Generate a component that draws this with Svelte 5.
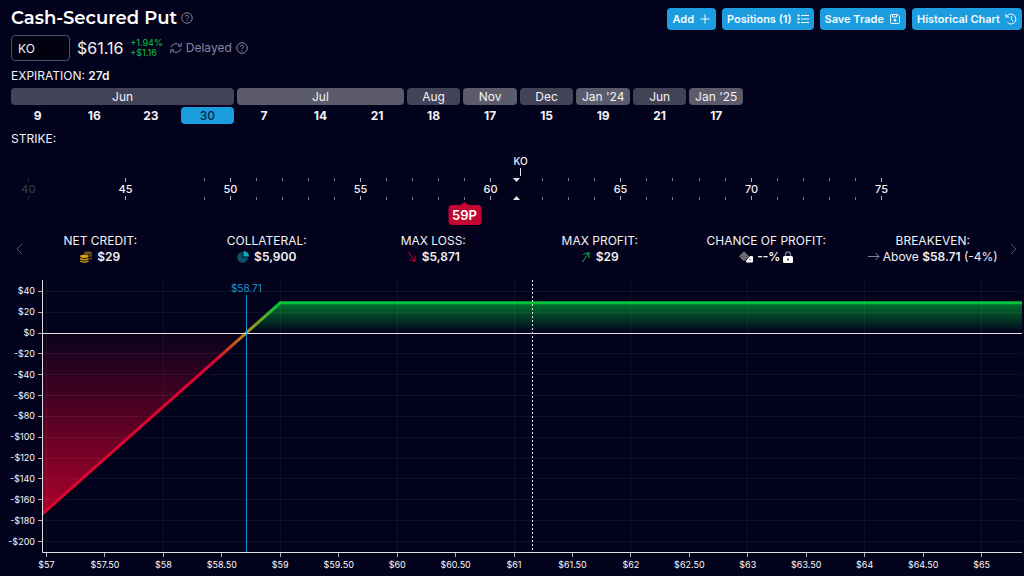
<script>
  let width = $state(1024);

  const months = [
    { name: 'Jun', days: [9, 16, 23, 30] },
    { name: 'Jul', days: [7, 14, 21] },
    { name: 'Aug', days: [18] },
    { name: 'Nov', days: [17] },
    { name: 'Dec', days: [15] },
    { name: "Jan '24", days: [19] },
    { name: 'Jun', days: [21] },
    { name: "Jan '25", days: [17] }
  ];
  const days = months.flatMap((m) => m.days.map((d) => ({ d, month: m.name })));
  let selected = $state(3);
  let symbol = $state('KO');

  // strike ruler: position is counted in steps from the 50 strike
  const step = $derived(width * 0.02544);
  const sx = (n) => Math.floor(width * 0.2247 + n * step) + 0.5;
  const majors = [
    { v: 40, n: -7.75, faded: true },
    { v: 45, n: -4 },
    ...[50, 55, 60, 65, 70, 75].map((v) => ({ v, n: v - 50 }))
  ];
  const minors = [-1, ...Array.from({ length: 25 }, (_, i) => i).filter((i) => i % 5 && i !== 11)];

  // payoff chart
  const left = 42;
  const perDollar = $derived((width - 43) / 8.393);
  const cx = (p) => 46.5 + (p - 57) * perDollar;
  const cy = (v) => 53 - v * 1.0425;
  const crisp = (n) => Math.floor(n) + 0.5;
  const yTicks = Array.from({ length: 13 }, (_, i) => 40 - i * 20);
  const xTicks = Array.from({ length: 17 }, (_, i) => 57 + i / 2);
  const money = (v) => (v < 0 ? '-$' : '$') + Math.abs(v);
  const price = (v) => '$' + (v % 1 ? v.toFixed(2) : v);
  const startPrice = $derived(57 - 3.5 / perDollar);
  const startY = $derived(cy((startPrice - 58.71) * 100));
  const right = $derived(width - 2);
</script>

{#snippet question()}
  <svg class="icon" width="12" height="12" viewBox="0 0 24 24" fill="none" stroke="currentColor" stroke-width="2">
    <circle cx="12" cy="12" r="10.5" />
    <path d="M8.7 9.4C9 7.6 10.3 6.6 12 6.6c1.900 0 3.300 1.200 3.300 2.900 0 2.500-3.300 2.500-3.300 4.700" />
    <path d="M12 16v2.400" />
  </svg>
{/snippet}

<div class="page" bind:clientWidth={width}>
  <header>
    <div class="title">
      <h1>Cash-Secured Put</h1>
      <button class="help" aria-label="Strategy help">{@render question()}</button>
    </div>
    <nav>
      <button class="action">Add
        <svg width="12" height="12" viewBox="0 0 12 12" fill="none" stroke="currentColor"><path d="M6 1.500v9M1.500 6h9" /></svg>
      </button>
      <button class="action">Positions (1)
        <svg width="12" height="12" viewBox="0 0 12 12" fill="none" stroke="currentColor"><path d="M4 2.500h8M4 6h8M4 9.500h8" /><path d="M.5 2.500h2M.5 6h2M.5 9.500h2" stroke-width="2" /></svg>
      </button>
      <button class="action">Save Trade
        <svg width="12" height="12" viewBox="0 0 12 12" fill="none" stroke="currentColor"><path d="M1.500 2.500q0-1 1-1h6l2 2v6q0 1-1 1h-7q-1 0-1-1z" /><path d="M3.500 1.500v2.500h4v-2.500" /><circle cx="6" cy="7.300" r="1" fill="currentColor" /></svg>
      </button>
      <button class="action">Historical Chart
        <svg width="12" height="12" viewBox="0 0 12 12" fill="none" stroke="currentColor"><path d="M1 1v3h3M1.300 4A5 5 0 1 1 2.500 9.700" /><path d="M6.300 3.200v3l2 2" /></svg>
      </button>
    </nav>
  </header>

  <div class="ticker">
    <input aria-label="Symbol" bind:value={symbol} />
    <span class="price">$61.16</span>
    <span class="change"><span>+1.94%</span><span>+$1.16</span></span>
    <button class="delayed">
      <svg width="12" height="12" viewBox="0 0 12 12" fill="none" stroke="currentColor"><path d="M1 5.200A5 4.300 0 0 1 10.200 3.700M11.200 .8v3.400H7.800M11 6.800A5 4.300 0 0 1 1.800 8.300M.8 11.200V7.800h3.400" /></svg>
      <span>Delayed</span>
      {@render question()}
    </button>
  </div>

  <section class="expiration">
    <div class="label">EXPIRATION: <b>27d</b></div>
    <div class="dates">
      {#each months as m, i}
        <div class="month" class:light={i % 2} style="grid-column: span {m.days.length}">{m.name}</div>
      {/each}
      {#each days as day, i}
        <button class="day" class:selected={selected === i} aria-label="{day.month} {day.d}" onclick={() => (selected = i)}>{day.d}</button>
      {/each}
    </div>
  </section>

  <section>
    <div class="label strike">STRIKE:</div>
    <div class="ruler">
      <svg width="100%" height="86">
        {#each minors as n}
          <path class="minor" d="M{sx(n)} 31v3M{sx(n)} 50v3" />
        {/each}
        {#each majors as m}
          <g class:faded={m.faded}>
            <path class="major" d="M{sx(m.n)} 31v4M{sx(m.n)} 49v4" />
            <text x={sx(m.n)} y="46">{m.v}</text>
          </g>
        {/each}
        <text class="symbol" x={sx(11.15)} y="18">{symbol}</text>
        <path class="pointer" d="M{sx(11.14)} 21v8" />
        <path class="arrow" d="M{sx(11) - 3.500} 31h7l-3.500 4zM{sx(11) - 3.500} 53h7l-3.500 -4z" />
      </svg>
      <button class="badge" style="left: {sx(9)}px">59P</button>
    </div>
  </section>

  <section class="stats">
    <button class="prev" aria-label="Previous"><svg width="7" height="12" viewBox="0 0 7 12" fill="none" stroke="currentColor"><path d="M6 1L1 6l5 5" /></svg></button>
    <div class="stat">
      <span>NET CREDIT:</span>
      <span class="value">
        <svg width="12" height="12" viewBox="0 0 12 12"><g fill="#705112"><ellipse cx="8" cy="2" rx="4" ry="1.700" /><path d="M9 4.300q2-.3 3-1v1.800q-1 1-3 1.200zM9.500 7.200q1.500-.3 2.500-1v1.600q-1 .8-2.500 1z" /></g><g fill="#dba20b"><ellipse cx="4.300" cy="5.300" rx="4.200" ry="1.800" /><path d="M0 6.800q4.300 2.600 8.600 0v1.500q-4.300 2.600-8.600 0zM0 9.200q4.300 2.600 8.600 0v1.200q-4.300 2.800-8.600 0z" /></g></svg>
        <b>$29</b>
      </span>
    </div>
    <div class="stat">
      <span>COLLATERAL:</span>
      <span class="value">
        <svg width="12" height="12" viewBox="0 0 12 12"><path d="M5.500 1v5.500H11A5.400 5.400 0 1 1 5.500 1z" fill="#0b5068" /><path d="M6.500 0A5.500 5.500 0 0 1 12 5.500H6.500z" fill="#10aec5" /></svg>
        <b>$5,900</b>
      </span>
    </div>
    <div class="stat">
      <span>MAX LOSS:</span>
      <span class="value">
        <svg width="10" height="12" viewBox="0 0 10 12" fill="none" stroke="#c50334"><path d="M1.500 1l6.500 9.500M2.500 8.500L8 10.500V4.500" /></svg>
        <b>$5,871</b>
      </span>
    </div>
    <div class="stat">
      <span>MAX PROFIT:</span>
      <span class="value">
        <svg width="10" height="12" viewBox="0 0 10 12" fill="none" stroke="#05b53c"><path d="M1.500 11L8 1.500M2 3.500L8 1.500V7" /></svg>
        <b>$29</b>
      </span>
    </div>
    <div class="stat">
      <span>CHANCE OF PROFIT:</span>
      <span class="value tight">
        <svg width="15" height="12" viewBox="0 0 15 12"><path d="M5 .8L9.500 5.300 5 9.800.5 5.300z" fill="#77777f" stroke="#77777f" stroke-linejoin="round" /><g fill="#25243a"><circle cx="5" cy="3" r=".6" /><circle cx="5" cy="5.300" r=".6" /><circle cx="5" cy="7.600" r=".6" /><circle cx="2.700" cy="5.300" r=".6" /><circle cx="7.300" cy="5.300" r=".6" /></g><path d="M11 5h2q1 0 1 1v4.500q0 1-1 1H8q-1 0-1-1V9.800z" fill="#fff" /><circle cx="11" cy="8.700" r=".7" fill="#25243a" /></svg>
        <b>--%</b>
        <svg width="10" height="12" viewBox="0 0 10 12"><path d="M2.500 5.500V3.500a2.500 2.500 0 0 1 5 0v2" fill="none" stroke="#77777f" stroke-width="1.300" /><rect y="5" width="10" height="7" rx="1.500" fill="#fff" /><path d="M5 7.500v2" stroke="#03021c" stroke-width="1.400" /></svg>
      </span>
    </div>
    <div class="stat">
      <span>BREAKEVEN:</span>
      <span class="value tight">
        <svg width="12" height="12" viewBox="0 0 12 12" fill="none" stroke="#85858d"><path d="M0 5.500h11M7.500 2l3.500 3.500L7.500 9" /></svg>
        <span>Above <b>$58.71</b> (-4%)</span>
      </span>
    </div>
    <button class="next" aria-label="Next"><svg width="7" height="12" viewBox="0 0 7 12" fill="none" stroke="currentColor"><path d="M1 1l5 5-5 5" /></svg></button>
  </section>

  <svg class="chart" width="100%" height="296" role="img" aria-label="Profit and loss by share price">
    <defs>
      <linearGradient id="gain" x1="0" y1="0" x2="0" y2="1"><stop offset="0" stop-color="#00b838" stop-opacity=".62" /><stop offset="1" stop-color="#00b838" stop-opacity="0" /></linearGradient>
      <linearGradient id="loss" x1="0" y1="0" x2="0" y2="1"><stop offset="0" stop-color="#d8002f" stop-opacity=".03" /><stop offset="1" stop-color="#d8002f" stop-opacity=".8" /></linearGradient>
      <linearGradient id="payoff" gradientUnits="userSpaceOnUse" x1={cx(58.45)} x2={cx(58.97)} y1="0" y2="0"><stop offset="0" stop-color="#dc052f" /><stop offset=".5" stop-color="#b98a12" /><stop offset="1" stop-color="#05c43c" /></linearGradient>
    </defs>
    <path fill="url(#gain)" d="M{cx(58.71)} 53L{cx(59)} {cy(29)}H{right}V53z" />
    <path fill="url(#loss)" d="M{left} 53H{cx(58.71)}L{left} {startY}z" />
    <g class="grid">
      {#each yTicks as v}<path d="M{left} {crisp(cy(v))}H{right}" />{/each}
      {#each xTicks.filter((p) => p % 1 === 0) as p}<path d="M{crisp(cx(p))} 0V273" />{/each}
    </g>
    <path class="payoff" stroke="url(#payoff)" d="M{left} {startY}L{cx(59)} {cy(29)}H{right}" />
    <path class="spot" d="M{crisp(cx(61.16))} 0V272" />
    <path class="axis" d="M{left} 53.5H{right}M{left + 0.5} 0V272.5H{right}" />
    <path class="breakeven" d="M{crisp(cx(58.71))} 15V272" />
    <text class="even" x={cx(58.71)} y="12">$58.71</text>
    {#each yTicks as v}
      <path class="tick" d="M38 {crisp(cy(v))}h4" />
      <text class="y" x="35" y={Math.round(cy(v)) + 3}>{money(v)}</text>
    {/each}
    {#each xTicks as p}
      <path class="tick" d="M{crisp(cx(p))} 273v4" />
      <text class="x" x={cx(p)} y="288">{price(p)}</text>
    {/each}
  </svg>
</div>

<style>
  :global(body) {
    margin: 0;
    background: #03021c;
  }
  .page {
    overflow: hidden;
    color: #f2f2f4;
    background: #03021c;
    font: 12px/16px Inter, "Liberation Sans", sans-serif;
  }
  button {
    padding: 0;
    border: 0;
    background: none;
    color: inherit;
    font: inherit;
    cursor: pointer;
  }
  svg {
    display: block;
    flex: none;
  }
  header {
    display: flex;
    justify-content: space-between;
    padding: 8px 2px 0 11px;
  }
  .title {
    display: flex;
    align-items: center;
    gap: 4px;
    height: 20px;
  }
  h1 {
    margin: 0;
    color: #fff;
    font: 600 18px/20px Montserrat, Inter, sans-serif;
  }
  .help {
    color: #7f8094;
  }
  nav {
    display: flex;
    gap: 6px;
  }
  .action {
    display: flex;
    align-items: center;
    gap: 5px;
    height: 22px;
    padding: 0 5px;
    border-radius: 4px;
    background: #1b9ddf;
    color: #f4fbff;
    font-size: 11px;
    font-weight: 600;
  }
  .ticker {
    display: flex;
    align-items: center;
    gap: 7px;
    padding: 5px 11px 0;
  }
  input {
    box-sizing: border-box;
    width: 59px;
    height: 26px;
    padding: 0 6px;
    border: 1px solid #4b5268;
    border-radius: 4px;
    background: #01010f;
    color: #f2f2f4;
    font: inherit;
  }
  .price {
    font-size: 16px;
  }
  .change {
    display: flex;
    flex-direction: column;
    color: #05c43c;
    font-size: 9px;
    line-height: 10px;
  }
  .delayed {
    display: flex;
    align-items: center;
    gap: 4px;
    color: #8586a0;
  }
  .expiration {
    padding: 7px 11px 0;
  }
  .dates {
    display: grid;
    grid-template-columns: repeat(13, minmax(0, 1fr));
    gap: 2px 3px;
    max-width: 732px;
    margin-top: 4px;
    text-align: center;
    line-height: 17px;
  }
  .month {
    border-radius: 4px;
    background: #434358;
  }
  .month.light {
    background: #5c5b6c;
  }
  .day {
    height: 17px;
    border-radius: 4px;
    font-weight: 700;
    line-height: 17px;
  }
  .day.selected {
    background: #1b9ddf;
    color: #062744;
    font-weight: 500;
  }
  .strike {
    padding: 7px 11px 0;
  }
  .ruler {
    position: relative;
  }
  .ruler text {
    fill: #f2f2f4;
    font-size: 11px;
    font-weight: 500;
    text-anchor: middle;
  }
  .ruler .symbol {
    font-size: 10px;
  }
  .faded {
    opacity: .2;
  }
  .minor {
    stroke: #777785;
  }
  .major {
    stroke: #b0b0b8;
  }
  .pointer {
    stroke: #e6e6ea;
  }
  .arrow {
    fill: #e6e6ea;
  }
  .badge {
    position: absolute;
    top: 58px;
    width: 33px;
    height: 20px;
    border-radius: 4px;
    background: #c20631;
    color: #fff;
    font-size: 13px;
    font-weight: 600;
    transform: translateX(-50%);
  }
  .badge::before {
    content: "";
    position: absolute;
    top: -3px;
    left: 50%;
    border: solid transparent;
    border-width: 0 4px 3px;
    border-bottom-color: #c20631;
    transform: translateX(-50%);
  }
  .stats {
    position: relative;
    display: grid;
    grid-template-columns: repeat(6, 1fr);
    padding: 0 8px 15px 17px;
  }
  .stat {
    display: flex;
    flex-direction: column;
    align-items: center;
    white-space: nowrap;
  }
  .value {
    display: flex;
    align-items: center;
    gap: 5px;
  }
  .value.tight {
    gap: 3px;
  }
  b {
    font-weight: 600;
  }
  .prev,
  .next {
    position: absolute;
    top: 10px;
    color: #55556a;
  }
  .prev {
    left: 16px;
  }
  .next {
    right: 7px;
  }
  .grid path {
    stroke: #fff;
    stroke-opacity: .055;
  }
  .payoff {
    fill: none;
    stroke-width: 3px;
  }
  .axis {
    fill: none;
    stroke: #e2e2e6;
  }
  .tick {
    stroke: #b4b4bc;
  }
  .spot {
    stroke: #e2e2e6;
    stroke-dasharray: 2 2;
  }
  .breakeven {
    stroke: #1b93d4;
  }
  .chart text {
    fill: #f8f8fa;
    font-size: 9px;
  }
  .chart .y {
    text-anchor: end;
  }
  .chart .x {
    text-anchor: middle;
  }
  .chart .even {
    fill: #1b93dc;
    font-size: 10px;
    text-anchor: middle;
  }
</style>
